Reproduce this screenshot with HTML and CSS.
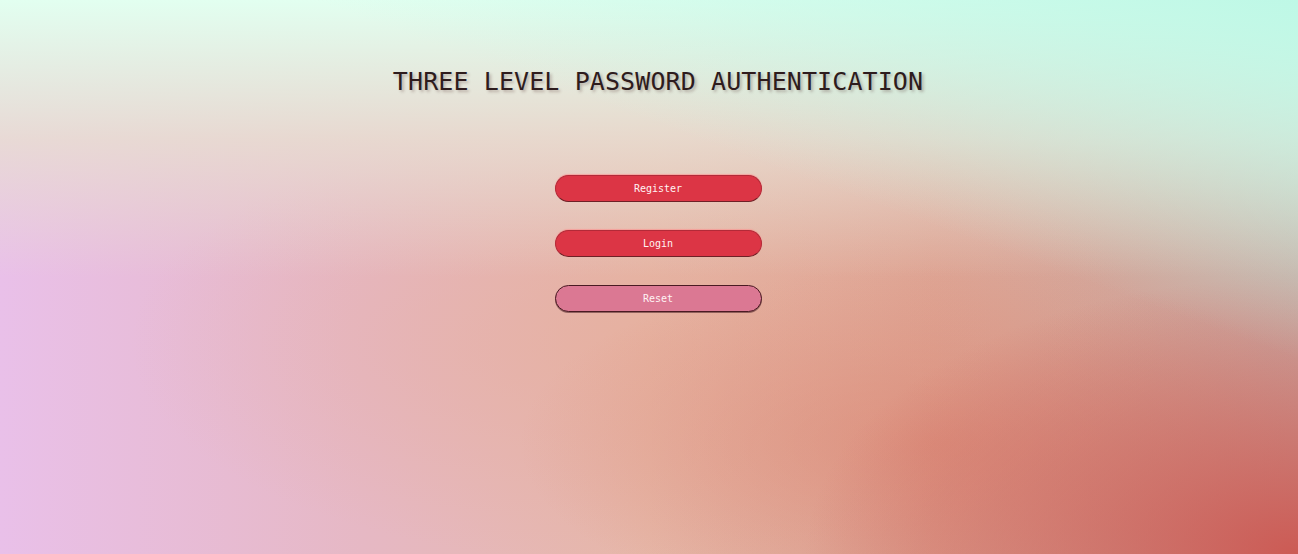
FILE: index.html
```html
<!DOCTYPE html>
<html lang="en">
<head>
<meta charset="utf-8">
<title>Three Level Password Authentication</title>
<link rel="stylesheet" href="styles.css">
</head>
<body>
<main class="page">
  <h1 class="title">THREE LEVEL PASSWORD AUTHENTICATION</h1>
  <div class="actions">
    <button class="btn btn-primary" type="button">Register</button>
    <button class="btn btn-primary" type="button">Login</button>
    <button class="btn btn-reset" type="reset">Reset</button>
  </div>
</main>
</body>
</html>
```
FILE: styles.css
```css
html, body {
  margin: 0;
  height: 100%;
}
body {
  font-family: "DejaVu Sans Mono", "Liberation Mono", monospace;
  background:
    linear-gradient(200deg, rgba(190, 248, 230, 1) 0%, rgba(190, 248, 230, 0) 35%),
    linear-gradient(180deg, rgba(226, 255, 240, 1) 0%, rgba(232, 222, 210, 0.85) 25%, rgba(232, 215, 205, 0) 50%),
    radial-gradient(ellipse 38% 50% at 100% 100%, rgba(204, 90, 84, 1) 0%, rgba(204, 90, 84, 0) 100%),
    radial-gradient(ellipse 32% 32% at 72% 80%, rgba(218, 125, 105, 0.5) 0%, rgba(218, 125, 105, 0) 100%),
    radial-gradient(ellipse 40% 40% at 50% 62%, rgba(230, 170, 150, 0.5) 0%, rgba(230, 170, 150, 0) 100%),
    linear-gradient(90deg, #e9c0e9 0%, #e6b8c4 28%, #e6b7a8 50%, #dca393 72%, #c9a7a0 100%);
}
.page {
  display: flex;
  flex-direction: column;
  align-items: center;
  padding-top: 66px;
  padding-left: 18px;
}
.title {
  margin: 0;
  font-size: 25px;
  font-weight: normal;
  letter-spacing: 0.1px;
  color: #2e1c1d;
  text-shadow: 2px 2px 3px rgba(80, 40, 40, 0.3);
  line-height: 32px;
}
.actions {
  display: flex;
  flex-direction: column;
  gap: 28px;
  margin-top: 77px;
}
.btn {
  width: 207px;
  height: 27px;
  border-radius: 14px;
  font-family: "DejaVu Sans Mono", "Liberation Mono", monospace;
  font-size: 10px;
  color: #fff3f3;
  cursor: pointer;
  padding: 0;
}
.btn-primary {
  background: #dc3545;
  border: 1px solid #b32a38;
  border-bottom-color: #6e2026;
  box-shadow: 0 -1px 1px rgba(255, 140, 140, 0.6);
}
.btn-reset {
  background: #db7893;
  border: 1px solid #4a1a22;
  box-shadow: 0 1px 0 rgba(60, 20, 25, 0.5);
}
```
